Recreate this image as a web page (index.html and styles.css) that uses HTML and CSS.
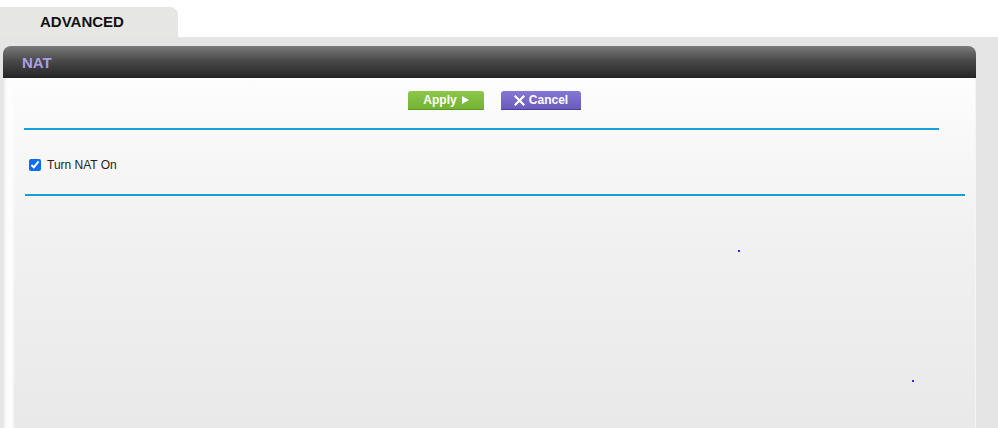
FILE: index.html
```html
<!DOCTYPE html>
<html>
<head>
<meta charset="utf-8">
<link rel="stylesheet" href="styles.css">
</head>
<body>
<div class="tabs">
  <div class="tab">ADVANCED</div>
</div>
<div class="stage">
  <div class="panel">
    <div class="panel-head">NAT</div>
    <div class="panel-body">
      <div class="buttons">
        <button class="btn apply">Apply <span class="tri"></span></button>
        <button class="btn cancel"><svg class="x" width="11" height="11" viewBox="0 0 11 11"><path d="M1.5 1.5L9.5 9.5M9.5 1.5L1.5 9.5" stroke="#fff" stroke-width="2.2" stroke-linecap="square"/></svg>Cancel</button>
      </div>
      <div class="rule rule1"></div>
      <label class="opt"><input type="checkbox" checked> Turn NAT On</label>
      <div class="rule rule2"></div>
      <span class="dot dot1"></span>
      <span class="dot dot2"></span>
    </div>
  </div>
</div>
</body>
</html>
```
FILE: styles.css
```css
html, body { margin: 0; padding: 0; }
body {
  width: 998px;
  height: 428px;
  overflow: hidden;
  background: #fff;
  font-family: "Liberation Sans", Arial, sans-serif;
}
.tabs {
  height: 37px;
  padding-top: 7px;
  box-sizing: border-box;
}
.tab {
  width: 178px;
  height: 30px;
  background: #e6e6e4;
  border-top-right-radius: 8px;
  font-size: 15px;
  font-weight: bold;
  color: #111;
  box-sizing: border-box;
  padding: 6px 0 0 40px;
}
.stage {
  background: #e5e5e5;
  height: 391px;
  padding: 9px 22px 0 3px;
  box-sizing: border-box;
}
.panel {
  width: 973px;
  height: 382px;
  display: flex;
  flex-direction: column;
}
.panel-head {
  height: 32px;
  background: linear-gradient(#7a7a7a 0%, #4a4a4a 45%, #252525 100%);
  border-radius: 8px 8px 0 0;
  color: #aaa0e4;
  font-size: 15px;
  font-weight: bold;
  padding: 8px 0 0 19px;
  box-sizing: border-box;
}
.panel-body {
  flex: 1;
  position: relative;
  background: linear-gradient(90deg, #e9e9e9 0px, #fdfdfd 4px, #fdfdfd 9px, rgba(255,255,255,0) 12px),
              linear-gradient(#fdfdfd 0%, #f1f1f1 45%, #e9e9e9 100%);
  border-right: 1px solid #f5f5f5;
  padding-top: 13px;
  box-sizing: border-box;
}
.buttons {
  display: flex;
  gap: 17px;
  padding-left: 405px;
}
.btn {
  height: 19px;
  border: none;
  border-radius: 3px 3px 0 0;
  color: #fff;
  font-family: "Liberation Sans", Arial, sans-serif;
  font-size: 12px;
  font-weight: bold;
  padding: 0;
  display: flex;
  align-items: center;
  justify-content: center;
}
.apply {
  width: 76px;
  background: linear-gradient(#8cc64a, #74b334);
  border-bottom: 1px solid #5a9a25;
}
.cancel {
  width: 80px;
  background: linear-gradient(#8577d4, #6a5bbd);
  border-bottom: 1px solid #4e3f9c;
  gap: 4px;
}
.tri {
  display: inline-block;
  width: 0; height: 0;
  border-left: 7px solid #fff;
  border-top: 4.5px solid transparent;
  border-bottom: 4.5px solid transparent;
  margin-left: 5px;
}
.x { display: block; }
.rule {
  height: 2px;
  background: #169fd3;
}
.rule1 {
  margin: 18px 0 0 21px;
  width: 915px;
}
.opt {
  display: flex;
  align-items: center;
  margin: 28px 0 0 26px;
  font-size: 12px;
  color: #222;
  height: 14px;
}
.opt input {
  width: 12px;
  height: 12px;
  margin: 0 6px 0 0;
  accent-color: #0b6ef0;
}
.rule2 {
  margin: 22px 0 0 22px;
  width: 940px;
}
.dot {
  position: absolute;
  width: 2px;
  height: 2px;
  background: #2a2ad6;
}
.dot1 { left: 735px; top: 172px; }
.dot2 { left: 909px; top: 302px; }
```
